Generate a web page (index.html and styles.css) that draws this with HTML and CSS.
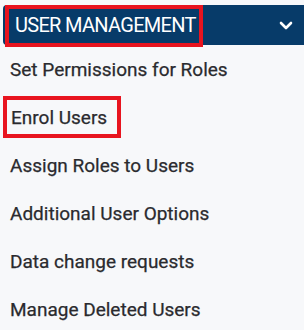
FILE: index.html
```html
<!DOCTYPE html>
<html>
<head>
<meta charset="utf-8">
<link rel="stylesheet" href="styles.css">
</head>
<body>
<div class="menu">
  <div class="menu-head">
    <span class="menu-title">User Management</span>
    <span class="mark mark-title"></span>
    <svg class="chevron" width="14" height="9" viewBox="0 0 14 9">
      <path d="M2 2 L7 7 L12 2" fill="none" stroke="#fff" stroke-width="2.6" stroke-linecap="round" stroke-linejoin="round"/>
    </svg>
  </div>
  <ul class="menu-list">
    <li>Set Permissions for Roles</li>
    <li class="marked">Enrol Users<span class="mark mark-item"></span></li>
    <li>Assign Roles to Users</li>
    <li>Additional User Options</li>
    <li>Data change requests</li>
    <li>Manage Deleted Users</li>
  </ul>
</div>
</body>
</html>
```
FILE: styles.css
```css
* {
  box-sizing: border-box;
}
body {
  margin: 0;
  background: #f7f8fa;
  font-family: Roboto, "Liberation Sans", sans-serif;
  overflow: hidden;
}
.menu {
  padding-top: 5px;
}
.menu-head {
  position: relative;
  margin-left: 3px;
  height: 40px;
  background: #073b69;
  border-radius: 4px 0 0 4px;
  display: flex;
  align-items: center;
  justify-content: space-between;
  padding: 0 11px 0 12px;
}
.menu-title {
  color: #fff;
  text-transform: uppercase;
  font-size: 20px;
  letter-spacing: -0.7px;
}
.chevron {
  margin-top: 1px;
}
.mark {
  position: absolute;
  border: 4px solid #e8141f;
}
.mark-title {
  left: 2px;
  top: 0;
  width: 198px;
  height: 42px;
}
.menu-list {
  list-style: none;
  margin: 0;
  padding: 0;
}
.menu-list li {
  position: relative;
  height: 48px;
  line-height: 49px;
  padding-left: 10px;
  font-size: 19px;
  color: #2a2a2e;
  -webkit-text-stroke: 0.25px #2a2a2e;
}
.menu-list li.marked {
  padding-left: 11px;
}
.mark-item {
  left: 3px;
  top: 3px;
  width: 118px;
  height: 42px;
}
```
